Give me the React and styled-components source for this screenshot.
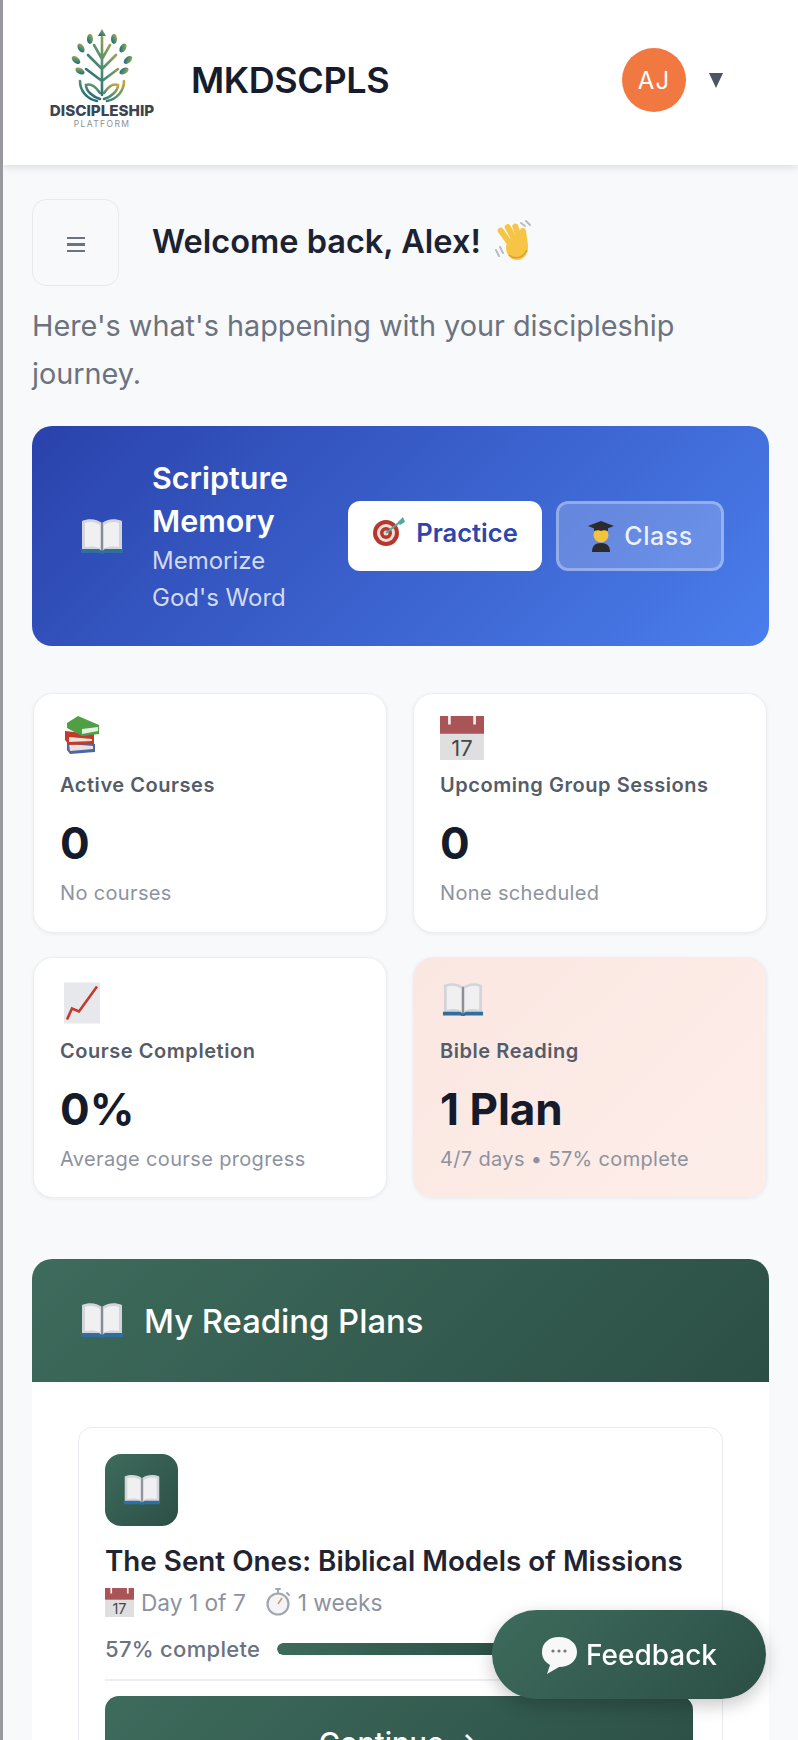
import styled, { createGlobalStyle } from "styled-components";

const GlobalStyle = createGlobalStyle`
html, body {
    margin: 0;
    padding: 0;
    background: #f8f9fb;
    font-family: Inter, "Noto Sans", sans-serif;
}
* { box-sizing: border-box; }
`
const Page = styled.div`
height: 1740px;
overflow: hidden;
background: #f8f9fb;
border-left: 3px solid #b4b6ba;
border-image: linear-gradient(90deg, #98999d, #dfe0e3) 1;
`
const Header = styled.header`
height: 165px;
background: #fff;
display: flex;
align-items: center;
padding: 0 75px 5px 44px;
box-shadow: 0 2px 8px rgba(0,0,0,0.12);
`
const Logo = styled.div`
width: 110px;
display: flex;
flex-direction: column;
align-items: center;
margin-bottom: 2px;
`
const LogoName = styled.span`
font-size: 15.2px;
font-weight: 800;
line-height: 16px;
color: #3c4450;
`
const LogoSub = styled.span`
font-size: 8.5px;
line-height: 10px;
letter-spacing: 1.4px;
color: #8b9096;
`
const Brand = styled.h1`
margin: 0 0 0 34px;
font-size: 36px;
font-weight: 600;
letter-spacing: -0.4px;
color: #161c2b;
flex: 1;
`
const Avatar = styled.div`
width: 64px;
height: 64px;
border-radius: 50%;
background: #f27842;
color: #fff;
font-size: 24px;
letter-spacing: 1px;
display: flex;
align-items: center;
justify-content: center;
`
const Caret = styled.span`
width: 0;
height: 0;
margin-left: 23px;
border-left: 7.5px solid transparent;
border-right: 7.5px solid transparent;
border-top: 15px solid #4b5563;
`
const Main = styled.main`
padding: 34px 29px 0 29px;
`
const WelcomeRow = styled.div`
display: flex;
align-items: center;
gap: 33px;
`
const MenuButton = styled.button`
width: 87px;
height: 87px;
border: 1px solid #e8eaee;
border-radius: 14px;
background: #f8f9fb;
display: flex;
flex-direction: column;
align-items: center;
justify-content: center;
gap: 4px;
padding: 4px 0 0 0;
`
const MenuLine = styled.span`
width: 18px;
height: 2.5px;
background: #6b7280;
`
const Welcome = styled.h2`
margin: 0 0 3px 0;
font-size: 32.5px;
font-weight: 600;
color: #1b2232;
display: flex;
align-items: center;
gap: 12px;
`
const Subtitle = styled.p`
margin: 16px 0 0 0;
font-size: 28.8px;
line-height: 48px;
color: #6b7280;
`
const Banner = styled.section`
margin-top: 28px;
height: 220px;
border-radius: 20px;
background: linear-gradient(135deg, #2a42ab 0%, #4a7eec 100%);
display: flex;
align-items: center;
padding: 0 44px 0 48px;
`
const BannerText = styled.div`
width: 196px;
margin-left: 28px;
`
const BannerTitle = styled.div`
font-size: 30.5px;
line-height: 43px;
font-weight: 600;
color: #fff;
`
const BannerSub = styled.div`
max-width: 160px;
font-size: 24px;
line-height: 37px;
color: rgba(255,255,255,0.78);
`
const Practice = styled.button`
width: 194px;
height: 70px;
border: 0;
border-radius: 12px;
background: #fff;
color: #2d46ae;
font: 600 25.5px Inter, sans-serif;
display: flex;
align-items: center;
justify-content: center;
gap: 10px;
padding: 0 0 8px 0;
`
const ClassButton = styled.button`
width: 168px;
height: 70px;
margin-left: 14px;
border: 3px solid rgba(255,255,255,0.3);
border-radius: 12px;
background: rgba(255,255,255,0.2);
color: rgba(255,255,255,0.9);
font: 500 25px Inter, sans-serif;
letter-spacing: 0.5px;
display: flex;
align-items: center;
justify-content: center;
gap: 9px;
padding: 0;
`
const StatGrid = styled.div`
margin-top: 47px;
display: grid;
grid-template-columns: 354px 354px;
column-gap: 26px;
row-gap: 24px;
padding-left: 1px;
`
const StatCard = styled.div`
height: ${props => props.$tall ? 241 : 240}px;
padding: ${props => props.$tall ? 24 : 22}px 26px 0 26px;
border: 1px solid #eceef2;
border-radius: 20px;
background: ${props => props.$pink ? "linear-gradient(135deg, #fbe7e2, #fdede9)" : "#fff"};
box-shadow: 0 1px 4px rgba(0,0,0,0.06);
`
const StatIcon = styled.div`
height: 49px;
display: flex;
align-items: flex-start;
padding-left: ${props => props.$indent || 0}px;
`
const StatLabel = styled.div`
margin-top: 6px;
font-size: 20px;
line-height: 28px;
font-weight: 600;
letter-spacing: 0.55px;
color: #545c6a;
`
const StatValue = styled.div`
margin-top: 16px;
font-size: 44px;
line-height: 56px;
font-weight: 700;
color: #151b2b;
`
const StatSub = styled.div`
margin-top: 8px;
font-size: 20px;
line-height: 28px;
letter-spacing: 0.35px;
color: #8c939f;
`
const PlansSection = styled.section`
margin-top: 61px;
border-radius: 20px;
background: #fff;
overflow: hidden;
`
const PlansHeader = styled.div`
height: 123px;
padding: 0 48px;
background: linear-gradient(135deg, #3d6b5c, #2c4f45);
display: flex;
align-items: center;
gap: 20px;
color: #fff;
font-size: 32.8px;
font-weight: 500;
`
const PlansBody = styled.div`
padding: 45px 46px 40px 46px;
`
const PlanCard = styled.div`
border: 1px solid #e8eaf0;
border-radius: 14px;
padding: 26px 29px 30px 26px;
`
const PlanIcon = styled.div`
width: 73px;
height: 72px;
border-radius: 16px;
background: linear-gradient(135deg, #3d6b5c, #2c4f45);
display: flex;
align-items: center;
justify-content: center;
`
const PlanTitle = styled.h3`
margin: 15px 0 0 0;
font-size: 27.8px;
line-height: 40px;
font-weight: 600;
color: #1f2430;
white-space: nowrap;
`
const PlanMeta = styled.div`
margin-top: 3px;
height: 36px;
display: flex;
align-items: center;
font-size: 22.7px;
color: #8c939f;
`
const MetaItem = styled.span`
display: flex;
align-items: center;
gap: 7px;
margin-right: 19px;
`
const ProgressRow = styled.div`
margin-top: 16px;
display: flex;
align-items: center;
gap: 17px;
font-size: 22px;
font-weight: 500;
letter-spacing: 0.3px;
color: #6b7280;
white-space: nowrap;
`
const ProgressTrack = styled.div`
flex: 1;
height: 12px;
border-radius: 6px;
background: #e8eaf0;
overflow: hidden;
`
const ProgressFill = styled.div`
height: 100%;
border-radius: 6px;
background: linear-gradient(90deg, #3d6b5c, #2c4f45);
`
const PlanDivider = styled.div`
margin-top: 17px;
height: 2px;
background: #eceef2;
`
const ContinueButton = styled.button`
margin-top: 15px;
width: 100%;
height: 92px;
border: 0;
border-radius: 14px;
background: linear-gradient(135deg, #3d6b5c, #2c4f45);
color: #fff;
font: 500 29px Inter, sans-serif;
`
const FeedbackButton = styled.button`
position: fixed;
right: 32px;
bottom: 41px;
width: 274px;
height: 89px;
border: 0;
border-radius: 45px;
background: linear-gradient(135deg, #3d6b5c, #2c4f45);
box-shadow: 0 6px 18px rgba(0,0,0,0.22);
color: #fff;
font: 500 28px Inter, sans-serif;
display: flex;
align-items: center;
justify-content: center;
gap: 8px;
padding: 0;
`

const LogoTree = () => (
    <svg width="66" height="74" viewBox="0 0 66 74">
        <defs>
            <linearGradient id="tree" x1="0" y1="1" x2="1" y2="0">
                <stop offset="0" stopColor="#12597a" />
                <stop offset="0.5" stopColor="#4f9070" />
                <stop offset="1" stopColor="#c9a93c" />
            </linearGradient>
        </defs>
        <g fill="none" stroke="url(#tree)" strokeWidth="2.6" strokeLinecap="round">
            <path d="M33 8V66M33 40L19 26M33 40L47 26M33 30L25 16M33 30L41 16M33 52L17 40M33 52L49 40" />
            <path d="M31 70C24 68 17 62 17 56C22 54 27 58 31 64M35 70C42 68 49 62 49 56C44 54 39 58 35 64" />
            <path d="M28 72C18 70 11 62 11 52M38 72C48 70 55 62 55 52" />
        </g>
        <g fill="url(#tree)">
            <path d="M33 0L37 7H29Z" />
            <ellipse cx="21" cy="10" rx="3" ry="5" />
            <ellipse cx="45" cy="10" rx="3" ry="5" />
            <ellipse cx="12" cy="19" rx="3" ry="5" transform="rotate(-30 12 19)" />
            <ellipse cx="54" cy="19" rx="3" ry="5" transform="rotate(30 54 19)" />
            <ellipse cx="7" cy="31" rx="3" ry="5" transform="rotate(-50 7 31)" />
            <ellipse cx="59" cy="31" rx="3" ry="5" transform="rotate(50 59 31)" />
            <ellipse cx="11" cy="42" rx="3" ry="5" transform="rotate(-60 11 42)" />
            <ellipse cx="55" cy="42" rx="3" ry="5" transform="rotate(60 55 42)" />
        </g>
    </svg>
)

const BookIcon = ({ width = 44 }) => (
    <svg width={width} height={width * 0.82} viewBox="0 0 44 36">
        <path d="M2 3C9 0 17 1 22 5C27 1 35 0 42 3V33H2Z" fill="#d4d5db" />
        <path d="M22 5V33" stroke="#6f737c" strokeWidth="1.5" />
        <path d="M5 5C10 3 16 4 20 7V30C15 28 10 28 5 29Z" fill="#f0f0f3" />
        <path d="M39 5C34 3 28 4 24 7V30C29 28 34 28 39 29Z" fill="#f0f0f3" />
        <path d="M1 31V35H19L22 36L25 35H43V31H25L22 33L19 31Z" fill="#2f6f9f" />
    </svg>
)
const WaveIcon = () => (
    <svg width="42" height="42" viewBox="0 0 42 42">
        <g stroke="#b9bcc2" strokeWidth="2" strokeLinecap="round">
            <path d="M3 30L6 36M7 27L10 33M28 3L32 6M33 1L37 5" />
        </g>
        <g fill="#f7c545">
            <rect x="22" y="3" width="6" height="22" rx="3" transform="rotate(-20 25 14)" />
            <rect x="16" y="3" width="6" height="24" rx="3" transform="rotate(-28 19 15)" />
            <rect x="10" y="6" width="6" height="24" rx="3" transform="rotate(-36 13 18)" />
            <rect x="28" y="8" width="6" height="20" rx="3" transform="rotate(-8 31 18)" />
            <ellipse cx="24" cy="28" rx="11" ry="12" />
        </g>
        <path d="M16 35C22 40 30 38 34 30" stroke="#dd9e2e" strokeWidth="1.5" fill="none" />
    </svg>
)
const TargetIcon = () => (
    <svg width="34" height="30" viewBox="0 0 34 30">
        <circle cx="14" cy="16" r="13" fill="#b5372e" />
        <circle cx="14" cy="16" r="9" fill="#f1ded6" />
        <circle cx="14" cy="16" r="6" fill="#b5372e" />
        <circle cx="14" cy="16" r="2.5" fill="#f1ded6" />
        <path d="M14 16L28 5" stroke="#53a89c" strokeWidth="2" />
        <path d="M26 5L31 0L33 5L28 8Z" fill="#53a89c" />
    </svg>
)
const GraduateIcon = () => (
    <svg width="28" height="32" viewBox="0 0 28 32">
        <path d="M5 32C5 26 8 23 14 23C20 23 23 26 23 32Z" fill="#2b2b2e" />
        <circle cx="14" cy="15" r="7.5" fill="#f2c33c" />
        <path d="M14 1L27 6L14 11L1 6Z" fill="#2b2b2e" />
        <path d="M7 8H21V11C16 9.5 12 9.5 7 11Z" fill="#2b2b2e" />
    </svg>
)
const BooksIcon = () => (
    <svg width="40" height="38" viewBox="-4 0 40 38">
        <path d="M3 26L31 28V36L6 38L3 34Z" fill="#4d66a8" />
        <path d="M5 28L29 30V33L6 35Z" fill="#e7e2dc" />
        <path d="M1 15L30 18V28L5 29L1 24Z" fill="#c5392b" />
        <path d="M5 21L28 23V25L5 26Z" fill="#eee3d9" />
        <path d="M3 7L14 0L35 9V18L18 20L3 12Z" fill="#4fa044" />
        <path d="M18 13L34 11V15L18 18Z" fill="#e9efe3" />
    </svg>
)
const CalendarIcon = ({ width = 44, height = 44 }) => (
    <svg width={width} height={height} viewBox="0 0 42 42">
        <rect x="0" y="17" width="42" height="25" fill="#dfdfe0" />
        <rect x="0" y="0" width="42" height="17" fill="#a95457" />
        <path d="M9 0V8M33 0V8" stroke="#f5f2f2" strokeWidth="2.5" />
        <text x="21" y="38" fontSize="21" fontFamily="Inter, sans-serif" fill="#44474c" textAnchor="middle">17</text>
    </svg>
)
const ChartIcon = () => (
    <svg width="36" height="42" viewBox="0 0 36 41">
        <rect width="36" height="41" fill="#e6e8ec" />
        <path d="M3 37L8 26L15 29L33 4" fill="none" stroke="#c43a2d" strokeWidth="2.6" />
    </svg>
)
const WatchIcon = () => (
    <svg width="26" height="28" viewBox="0 0 26 28">
        <path d="M11 1H15M13 1V5M22 5L24 7" stroke="#a2a6af" strokeWidth="2" strokeLinecap="round" />
        <circle cx="13" cy="16" r="10.5" fill="#f4f4f6" stroke="#a2a6af" strokeWidth="2.2" />
        <path d="M13 16L17 10" stroke="#d09a6a" strokeWidth="1.6" />
    </svg>
)
const BubbleIcon = () => (
    <svg width="37" height="38" viewBox="0 0 37 38">
        <path d="M18 1C28 1 36 7 36 16C36 25 28 31 18 31L6 38L9 29C4 26 1 22 1 16C1 7 8 1 18 1Z" fill="#f8f8f8" />
        <circle cx="12" cy="15" r="1.6" fill="#777" />
        <circle cx="18" cy="15" r="1.6" fill="#777" />
        <circle cx="24" cy="15" r="1.6" fill="#777" />
    </svg>
)

const App = () => {
    return (
        <Page>
            <GlobalStyle />
            <Header>
                <Logo>
                    <LogoTree />
                    <LogoName>DISCIPLESHIP</LogoName>
                    <LogoSub>PLATFORM</LogoSub>
                </Logo>
                <Brand>MKDSCPLS</Brand>
                <Avatar>AJ</Avatar>
                <Caret />
            </Header>
            <Main>
                <WelcomeRow>
                    <MenuButton>
                        <MenuLine />
                        <MenuLine />
                        <MenuLine />
                    </MenuButton>
                    <Welcome>Welcome back, Alex! <WaveIcon /></Welcome>
                </WelcomeRow>
                <Subtitle>Here's what's happening with your discipleship journey.</Subtitle>
                <Banner>
                    <BookIcon />
                    <BannerText>
                        <BannerTitle>Scripture Memory</BannerTitle>
                        <BannerSub>Memorize God's Word</BannerSub>
                    </BannerText>
                    <Practice><TargetIcon /> Practice</Practice>
                    <ClassButton><GraduateIcon /> Class</ClassButton>
                </Banner>
                <StatGrid>
                    <StatCard>
                        <StatIcon><BooksIcon /></StatIcon>
                        <StatLabel>Active Courses</StatLabel>
                        <StatValue>0</StatValue>
                        <StatSub>No courses</StatSub>
                    </StatCard>
                    <StatCard>
                        <StatIcon><CalendarIcon /></StatIcon>
                        <StatLabel>Upcoming Group Sessions</StatLabel>
                        <StatValue>0</StatValue>
                        <StatSub>None scheduled</StatSub>
                    </StatCard>
                    <StatCard $tall>
                        <StatIcon $indent={4}><ChartIcon /></StatIcon>
                        <StatLabel>Course Completion</StatLabel>
                        <StatValue>0%</StatValue>
                        <StatSub>Average course progress</StatSub>
                    </StatCard>
                    <StatCard $tall $pink>
                        <StatIcon $indent={2}><BookIcon width={42} /></StatIcon>
                        <StatLabel>Bible Reading</StatLabel>
                        <StatValue>1 Plan</StatValue>
                        <StatSub>4/7 days • 57% complete</StatSub>
                    </StatCard>
                </StatGrid>
                <PlansSection>
                    <PlansHeader>
                        <BookIcon />
                        My Reading Plans
                    </PlansHeader>
                    <PlansBody>
                        <PlanCard>
                            <PlanIcon><BookIcon width={38} /></PlanIcon>
                            <PlanTitle>The Sent Ones: Biblical Models of Missions</PlanTitle>
                            <PlanMeta>
                                <MetaItem><CalendarIcon width={29} height={29} /> Day 1 of 7</MetaItem>
                                <MetaItem><WatchIcon /> 1 weeks</MetaItem>
                            </PlanMeta>
                            <ProgressRow>
                                57% complete
                                <ProgressTrack>
                                    <ProgressFill style={{ width: "57%" }} />
                                </ProgressTrack>
                            </ProgressRow>
                            <PlanDivider />
                            <ContinueButton>Continue →</ContinueButton>
                        </PlanCard>
                    </PlansBody>
                </PlansSection>
            </Main>
            <FeedbackButton><BubbleIcon /> Feedback</FeedbackButton>
        </Page>
    );
};

export default App;
